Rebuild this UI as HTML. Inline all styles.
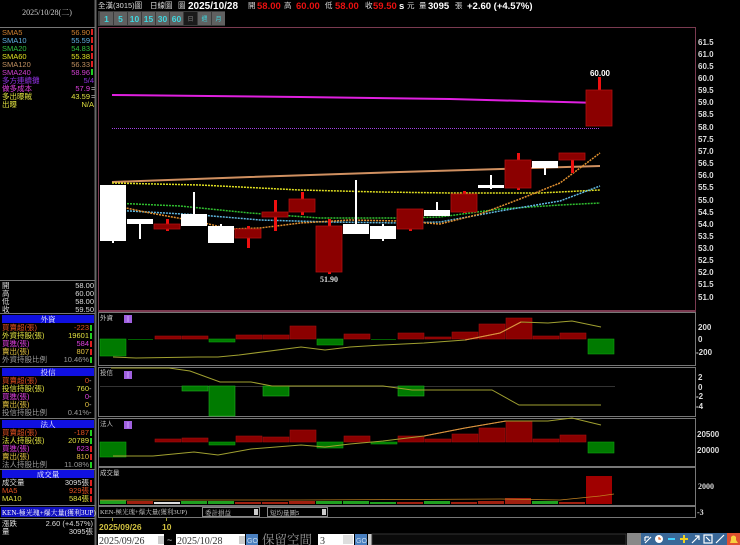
<!DOCTYPE html>
<html><head><meta charset="utf-8"><style>
html,body{margin:0;padding:0;background:#000;width:740px;height:545px;overflow:hidden}
svg{display:block}
text{font-family:"Liberation Sans","Noto Sans CJK TC",sans-serif}
.s{font-family:"Liberation Serif","Noto Serif CJK SC",serif}
</style></head><body>
<svg width="740" height="545" viewBox="0 0 740 545" xmlns="http://www.w3.org/2000/svg">
<rect width="740" height="545" fill="#000"/>
<!-- left panel -->
<line x1="95.5" y1="0" x2="95.5" y2="545" stroke="#666" stroke-width="2"/>
<text x="47" y="15" fill="#ccc" font-size="8" text-anchor="middle" class="s">2025/10/28(二)</text>
<line x1="0" y1="27.5" x2="95" y2="27.5" stroke="#777"/>
<g font-size="7.5" class="s">
<text x="2" y="35" fill="#d08030">SMA5</text><text x="90" y="35" fill="#d08030" text-anchor="end">56.90</text>
<text x="2" y="43" fill="#60b0e0">SMA10</text><text x="90" y="43" fill="#60b0e0" text-anchor="end">55.59</text>
<text x="2" y="51" fill="#30c040">SMA20</text><text x="90" y="51" fill="#30c040" text-anchor="end">54.83</text>
<text x="2" y="59" fill="#e0e020">SMA60</text><text x="90" y="59" fill="#e0e020" text-anchor="end">55.38</text>
<text x="2" y="67" fill="#c09060">SMA120</text><text x="90" y="67" fill="#c09060" text-anchor="end">56.33</text>
<text x="2" y="75" fill="#d040d0">SMA240</text><text x="90" y="75" fill="#d040d0" text-anchor="end">58.96</text>
<text x="2" y="83" fill="#9030e0">多方連續攤</text><text x="94" y="83" fill="#9030e0" text-anchor="end">5/4</text>
<text x="2" y="91" fill="#e040e0">做多成本</text><text x="90" y="91" fill="#e040e0" text-anchor="end">57.9</text>
<text x="2" y="99" fill="#e0e040">多出曝賊</text><text x="90" y="99" fill="#e0e040" text-anchor="end">43.59</text>
<text x="2" y="107" fill="#e0e040">出曝</text><text x="94" y="107" fill="#e0e040" text-anchor="end">N/A</text>
</g>
<g fill="#e02020"><rect x="91" y="29" width="2" height="6"/><rect x="91" y="37" width="2" height="6"/><rect x="91" y="45" width="2" height="6"/><rect x="91" y="53" width="2" height="6"/><rect x="91" y="61" width="2" height="6"/></g>
<rect x="91" y="69" width="2" height="6" fill="#20d020"/>
<g fill="#ccc" font-size="7"><text x="91" y="91">=</text><text x="91" y="99">=</text></g>

<line x1="0" y1="280.5" x2="95" y2="280.5" stroke="#777"/>
<g font-size="7.5" class="s" fill="#ddd">
<text x="2" y="288">開</text><text x="94" y="288" text-anchor="end">58.00</text>
<text x="2" y="296">高</text><text x="94" y="296" text-anchor="end">60.00</text>
<text x="2" y="304">低</text><text x="94" y="304" text-anchor="end">58.00</text>
<text x="2" y="312">收</text><text x="94" y="312" text-anchor="end">59.50</text>
</g>
<line x1="0" y1="313.5" x2="95" y2="313.5" stroke="#777"/>
<!-- 外資 -->
<rect x="2" y="315" width="92" height="8" fill="#1010e0"/>
<text x="48" y="322" fill="#fff" font-size="7.5" text-anchor="middle" class="s">外資</text>
<g font-size="7.5" class="s">
<text x="2" y="330" fill="#e05020">買賣超(張)</text><text x="89" y="330" fill="#e05020" text-anchor="end">-223</text>
<text x="2" y="338" fill="#e0e040">外資持股(張)</text><text x="89" y="338" fill="#e0e040" text-anchor="end">19601</text>
<text x="2" y="346" fill="#e040e0">買進(張)</text><text x="89" y="346" fill="#e040e0" text-anchor="end">584</text>
<text x="2" y="354" fill="#e0c040">賣出(張)</text><text x="89" y="354" fill="#e0c040" text-anchor="end">807</text>
<text x="2" y="362" fill="#999">外資持股比例</text><text x="89" y="362" fill="#999" text-anchor="end">10.46%</text>
</g>
<g><rect x="90" y="325" width="2" height="6" fill="#20d020"/><rect x="90" y="333" width="2" height="6" fill="#20d020"/><rect x="90" y="341" width="2" height="6" fill="#e02020"/><rect x="90" y="349" width="2" height="6" fill="#e02020"/><rect x="90" y="357" width="2" height="6" fill="#20d020"/></g>
<line x1="0" y1="366.5" x2="95" y2="366.5" stroke="#777"/>
<!-- 投信 -->
<rect x="2" y="368" width="92" height="8" fill="#1010e0"/>
<text x="48" y="375" fill="#fff" font-size="7.5" text-anchor="middle" class="s">投信</text>
<g font-size="7.5" class="s">
<text x="2" y="383" fill="#e05020">買賣超(張)</text><text x="89" y="383" fill="#e05020" text-anchor="end">0</text>
<text x="2" y="391" fill="#e0e040">投信持股(張)</text><text x="89" y="391" fill="#e0e040" text-anchor="end">760</text>
<text x="2" y="399" fill="#e040e0">買進(張)</text><text x="89" y="399" fill="#e040e0" text-anchor="end">0</text>
<text x="2" y="407" fill="#e0c040">賣出(張)</text><text x="89" y="407" fill="#e0c040" text-anchor="end">0</text>
<text x="2" y="415" fill="#999">投信持股比例</text><text x="89" y="415" fill="#999" text-anchor="end">0.41%</text>
<g fill="#ccc"><text x="89" y="383">-</text><text x="89" y="391">-</text><text x="89" y="399">-</text><text x="89" y="407">-</text><text x="89" y="415">-</text></g>
</g>
<line x1="0" y1="418.5" x2="95" y2="418.5" stroke="#777"/>
<!-- 法人 -->
<rect x="2" y="420" width="92" height="8" fill="#1010e0"/>
<text x="48" y="427" fill="#fff" font-size="7.5" text-anchor="middle" class="s">法人</text>
<g font-size="7.5" class="s">
<text x="2" y="435" fill="#e05020">買賣超(張)</text><text x="89" y="435" fill="#e05020" text-anchor="end">-187</text>
<text x="2" y="443" fill="#e0e040">法人持股(張)</text><text x="89" y="443" fill="#e0e040" text-anchor="end">20789</text>
<text x="2" y="451" fill="#e040e0">買進(張)</text><text x="89" y="451" fill="#e040e0" text-anchor="end">623</text>
<text x="2" y="459" fill="#e0c040">賣出(張)</text><text x="89" y="459" fill="#e0c040" text-anchor="end">810</text>
<text x="2" y="467" fill="#999">法人持股比例</text><text x="89" y="467" fill="#999" text-anchor="end">11.08%</text>
</g>
<g><rect x="90" y="430" width="2" height="6" fill="#20d020"/><rect x="90" y="438" width="2" height="6" fill="#20d020"/><rect x="90" y="446" width="2" height="6" fill="#e02020"/><rect x="90" y="454" width="2" height="6" fill="#e02020"/><rect x="90" y="462" width="2" height="6" fill="#20d020"/></g>
<line x1="0" y1="469.5" x2="95" y2="469.5" stroke="#777"/>
<!-- 成交量 -->
<rect x="2" y="470" width="92" height="8" fill="#1010e0"/>
<text x="48" y="477" fill="#fff" font-size="7.5" text-anchor="middle" class="s">成交量</text>
<g font-size="7.5" class="s">
<text x="2" y="485" fill="#ddd">成交量</text><text x="89" y="485" fill="#ddd" text-anchor="end">3095張</text>
<text x="2" y="493" fill="#e05020">MA5</text><text x="89" y="493" fill="#e05020" text-anchor="end">929張</text>
<text x="2" y="501" fill="#e0e040">MA10</text><text x="89" y="501" fill="#e0e040" text-anchor="end">584張</text>
</g>
<g fill="#e02020"><rect x="90" y="480" width="2" height="6"/><rect x="90" y="488" width="2" height="6"/><rect x="90" y="496" width="2" height="6"/></g>
<line x1="0" y1="505.5" x2="95" y2="505.5" stroke="#777"/>
<rect x="1" y="507" width="93" height="10" fill="#1010c0"/>
<text x="2" y="515" fill="#fff" font-size="7" class="s">KEN-極光瑰+爆大量(獲利3UP)</text>
<line x1="0" y1="518.5" x2="95" y2="518.5" stroke="#777"/>
<g font-size="7.5" class="s" fill="#ddd">
<text x="2" y="526">漲跌</text><text x="93" y="526" text-anchor="end">2.60 (+4.57%)</text>
<text x="2" y="534">量</text><text x="93" y="534" text-anchor="end">3095張</text>
</g>

<!-- top bar -->
<g font-size="7.5" class="s" fill="#ddd">
<text x="98" y="8">全漢(3015)圖</text><text x="150" y="8">日線圖</text><text x="178" y="8">圖</text>
</g>
<text x="188" y="9" fill="#fff" font-size="10" font-weight="bold">2025/10/28</text>
<g font-size="7.5" class="s" fill="#ddd"><text x="248" y="8">開</text><text x="284" y="8">高</text><text x="325" y="8">低</text><text x="365" y="8">收</text><text x="407" y="8">元</text><text x="419" y="8">量</text><text x="455" y="8">張</text></g>
<g font-size="9.5" font-weight="bold" fill="#e81010"><text x="257" y="9">58.00</text><text x="296" y="9">60.00</text><text x="335" y="9">58.00</text><text x="373" y="9">59.50</text></g>
<g font-size="9.5" font-weight="bold" fill="#fff"><text x="399" y="9">s</text><text x="428" y="9">3095</text><text x="467" y="9">+2.60 (+4.57%)</text></g>
<!-- period buttons -->
<rect x="98" y="11" width="127" height="15" fill="#3a3a3a"/>
<g fill="#606060"><rect x="100" y="12" width="13" height="13"/><rect x="114" y="12" width="13" height="13"/><rect x="128" y="12" width="13" height="13"/><rect x="142" y="12" width="13" height="13"/><rect x="156" y="12" width="13" height="13"/><rect x="170" y="12" width="13" height="13"/><rect x="198" y="12" width="13" height="13"/><rect x="212" y="12" width="13" height="13"/></g>
<rect x="184" y="12" width="13" height="13" fill="#1a1a1a"/>
<g fill="#40d8e0" font-size="8.5" font-weight="bold" text-anchor="middle"><text x="106.5" y="22">1</text><text x="120.5" y="22">5</text><text x="134.5" y="22">10</text><text x="148.5" y="22">15</text><text x="162.5" y="22">30</text><text x="176.5" y="22">60</text></g>
<g font-size="6" text-anchor="middle" class="s"><text x="190.5" y="21" fill="#888">日</text><text x="204.5" y="21" fill="#40d8e0">週</text><text x="218.5" y="21" fill="#40d8e0">月</text></g>

<!-- main frame -->
<rect x="98.5" y="27.5" width="597" height="283" fill="none" stroke="#7a3a50"/>
<g font-size="8" fill="#ddd" font-weight="bold" class="s">
<text x="698" y="45">61.5</text><text x="698" y="57">61.0</text><text x="698" y="69">60.5</text><text x="698" y="81">60.0</text><text x="698" y="93">59.5</text><text x="698" y="105">59.0</text><text x="698" y="117">58.5</text><text x="698" y="130">58.0</text><text x="698" y="142">57.5</text><text x="698" y="154">57.0</text><text x="698" y="166">56.5</text><text x="698" y="178">56.0</text><text x="698" y="190">55.5</text><text x="698" y="203">55.0</text><text x="698" y="215">54.5</text><text x="698" y="227">54.0</text><text x="698" y="239">53.5</text><text x="698" y="251">53.0</text><text x="698" y="263">52.5</text><text x="698" y="275">52.0</text><text x="698" y="287">51.5</text><text x="698" y="300">51.0</text>
</g>
<!-- MA lines -->
<polyline points="112,95 300,97 450,99 600,103" fill="none" stroke="#e020e0" stroke-width="2"/>
<line x1="112" y1="128.5" x2="600" y2="128.5" stroke="#a040e0" stroke-dasharray="1,1"/>
<polyline points="112,182 250,177 400,172 600,166" fill="none" stroke="#d09060" stroke-width="2"/>
<polyline points="112,183 200,185 300,190 380,192 450,193 540,193 600,190" fill="none" stroke="#e0e020" stroke-width="1.5" stroke-dasharray="2,1"/>
<polyline points="112,203 180,206 250,213 320,218 400,218 440,217 500,209 560,205 600,203" fill="none" stroke="#30c030" stroke-width="1.5" stroke-dasharray="2,1"/>
<polyline points="112,210 200,215 260,220 330,222 400,223 440,222 500,211 560,201 600,186" fill="none" stroke="#60b8e0" stroke-width="1.5" stroke-dasharray="2,1"/>
<polyline points="112,205 150,213 200,222 230,229 260,228 300,223 350,220 400,221 440,224 480,214 520,199 560,183 600,153" fill="none" stroke="#e09030" stroke-width="1.5" stroke-dasharray="2,1"/>
<!-- candles -->
<g fill="#fff">
<rect x="112" y="185" width="2" height="58"/><rect x="100" y="185" width="26" height="56"/>
<rect x="139" y="219" width="2" height="20"/><rect x="127" y="219" width="26" height="5"/>
<rect x="193" y="192" width="2" height="34"/><rect x="181" y="214" width="26" height="12"/>
<rect x="220" y="224" width="2" height="19"/><rect x="208" y="226" width="26" height="17"/>
<rect x="355" y="180" width="2" height="54"/><rect x="343" y="224" width="26" height="10"/>
<rect x="382" y="224" width="2" height="17"/><rect x="370" y="226" width="26" height="13"/>
<rect x="436" y="202" width="2" height="14"/><rect x="424" y="210" width="26" height="6"/>
<rect x="490" y="175" width="2" height="14"/><rect x="478" y="185" width="26" height="3"/>
<rect x="544" y="161" width="2" height="14"/><rect x="532" y="161" width="26" height="7"/>
</g>
<g fill="#ee1010">
<rect x="166" y="219" width="3" height="12"/><rect x="247" y="226" width="3" height="22"/><rect x="274" y="200" width="3" height="31"/><rect x="301" y="192" width="3" height="23"/><rect x="328" y="219" width="3" height="55"/><rect x="409" y="209" width="3" height="22"/><rect x="463" y="191" width="3" height="22"/><rect x="517" y="153" width="3" height="37"/><rect x="571" y="153" width="3" height="20"/><rect x="598" y="77" width="3" height="13"/>
</g>
<g fill="#8b0000" stroke="#b01010" stroke-width="0.8">
<rect x="154" y="224" width="26" height="5"/><rect x="235" y="229" width="26" height="9"/><rect x="262" y="212" width="26" height="5"/><rect x="289" y="199" width="26" height="13"/><rect x="316" y="226" width="26" height="46"/><rect x="397" y="209" width="26" height="20"/><rect x="451" y="194" width="26" height="18"/><rect x="505" y="160" width="26" height="28"/><rect x="559" y="153" width="26" height="7"/><rect x="586" y="90" width="26" height="36"/>
</g>
<text x="329" y="282" fill="#ddd" font-size="8" font-weight="bold" text-anchor="middle" class="s">51.90</text>
<text x="600" y="76" fill="#fff" font-size="8" font-weight="bold" text-anchor="middle">60.00</text>

<!-- sub panels frames -->
<g fill="none" stroke="#777">
<rect x="98.5" y="312.5" width="597" height="53"/>
<rect x="98.5" y="367.5" width="597" height="49"/>
<rect x="98.5" y="418.5" width="597" height="48"/>
<rect x="98.5" y="467.5" width="597" height="38"/>
<rect x="98.5" y="506.5" width="597" height="11"/>
</g>
<line x1="98" y1="311.5" x2="696" y2="311.5" stroke="#7a3a50"/>
<g font-size="6.5" fill="#ccc" class="s"><text x="100" y="320">外資</text><text x="100" y="375">投信</text><text x="100" y="426">法人</text><text x="100" y="475">成交量</text></g>
<g fill="#a060e0"><rect x="124" y="315" width="8" height="8"/><rect x="124" y="371" width="8" height="8"/><rect x="124" y="421" width="8" height="8"/></g>
<g stroke="#e0d0ff" stroke-width="0.6"><line x1="128" y1="316" x2="128" y2="322"/><line x1="128" y1="372" x2="128" y2="378"/><line x1="128" y1="422" x2="128" y2="428"/></g>
<!-- 外資 -->
<g fill="#8b0000" stroke="#a01010" stroke-width="0.6">
<rect x="155" y="336" width="26" height="3"/><rect x="182" y="336" width="26" height="3"/><rect x="236" y="335" width="26" height="4"/><rect x="263" y="335" width="26" height="4"/><rect x="290" y="326" width="26" height="13"/><rect x="344" y="334" width="26" height="5"/><rect x="398" y="333" width="26" height="6"/><rect x="425" y="337" width="26" height="2"/><rect x="452" y="332" width="26" height="7"/><rect x="479" y="324" width="26" height="15"/><rect x="506" y="318" width="26" height="21"/><rect x="533" y="336" width="26" height="3"/><rect x="560" y="333" width="26" height="6"/>
</g>
<g fill="#007a00" stroke="#10a010" stroke-width="0.6">
<rect x="100" y="339" width="26" height="17"/><rect x="209" y="339" width="26" height="3"/><rect x="317" y="339" width="26" height="6"/><rect x="588" y="339" width="26" height="15"/>
</g>
<line x1="128" y1="339.5" x2="153" y2="339.5" stroke="#006000"/><line x1="371" y1="339.5" x2="396" y2="339.5" stroke="#006000"/>
<polyline points="113,357 136,358 198,357 218,357 239,355 301,347 325,350 350,347 383,345 424,343 465,340 500,333 521,322 548,323 572,321 601,327" fill="none" stroke="#a0a030" stroke-width="1"/>
<polyline points="465,340 500,333 521,322" fill="none" stroke="#e09040" stroke-width="1"/>
<g font-size="8" fill="#ddd" font-weight="bold" class="s"><text x="698" y="330">200</text><text x="698" y="342">0</text><text x="696" y="355">-200</text></g>
<!-- 投信 -->
<line x1="100" y1="386.5" x2="615" y2="386.5" stroke="#333"/>
<g fill="#007a00" stroke="#20b020" stroke-width="0.6">
<rect x="182" y="386" width="26" height="5"/><rect x="209" y="386" width="26" height="30"/><rect x="263" y="386" width="26" height="10"/><rect x="398" y="386" width="26" height="10"/>
</g>
<polyline points="111,368 169,368 190,371 220,382 251,382 272,386 383,386 412,390 492,390 519,405 601,405" fill="none" stroke="#a0a030" stroke-width="1"/>
<g font-size="8" fill="#ddd" font-weight="bold" class="s"><text x="698" y="380">2</text><text x="698" y="390">0</text><text x="696" y="399">-2</text><text x="696" y="409">-4</text></g>
<!-- 法人 -->
<g fill="#8b0000" stroke="#a01010" stroke-width="0.6">
<rect x="155" y="439" width="26" height="3"/><rect x="182" y="438" width="26" height="4"/><rect x="236" y="436" width="26" height="6"/><rect x="263" y="437" width="26" height="5"/><rect x="290" y="430" width="26" height="12"/><rect x="344" y="436" width="26" height="6"/><rect x="398" y="436" width="26" height="6"/><rect x="425" y="439" width="26" height="3"/><rect x="452" y="434" width="26" height="8"/><rect x="479" y="428" width="26" height="14"/><rect x="506" y="421" width="26" height="21"/><rect x="533" y="439" width="26" height="3"/><rect x="560" y="435" width="26" height="7"/>
</g>
<g fill="#007a00" stroke="#10a010" stroke-width="0.6">
<rect x="100" y="442" width="26" height="15"/><rect x="209" y="442" width="26" height="3"/><rect x="317" y="442" width="26" height="6"/><rect x="371" y="442" width="26" height="2"/><rect x="588" y="442" width="26" height="11"/>
</g>
<polyline points="113,456 153,456 194,452 218,455 251,449 301,445 325,447 350,444 383,441 424,436 465,428 506,421 521,421 548,421 572,418 601,425" fill="none" stroke="#a0a030" stroke-width="1"/>
<polyline points="424,436 465,428 506,421" fill="none" stroke="#e09040" stroke-width="1"/>
<g font-size="8" fill="#ddd" font-weight="bold" class="s"><text x="697" y="437">20500</text><text x="697" y="453">20000</text></g>
<!-- volume -->
<g>
<rect x="100" y="500" width="26" height="4" fill="#20a020"/><rect x="127" y="501" width="26" height="3" fill="#a02010"/><rect x="154" y="502" width="26" height="2" fill="#ddd"/><rect x="181" y="501" width="26" height="3" fill="#20a020"/><rect x="208" y="501" width="26" height="3" fill="#20a020"/><rect x="235" y="502" width="26" height="2" fill="#a02010"/><rect x="262" y="502" width="26" height="2" fill="#a02010"/><rect x="289" y="501" width="26" height="3" fill="#a02010"/><rect x="316" y="501" width="26" height="3" fill="#20a020"/><rect x="343" y="501" width="26" height="3" fill="#20a020"/><rect x="370" y="502" width="26" height="2" fill="#20a020"/><rect x="397" y="502" width="26" height="2" fill="#a02010"/><rect x="424" y="501" width="26" height="3" fill="#20a020"/><rect x="451" y="502" width="26" height="2" fill="#a02010"/><rect x="478" y="501" width="26" height="3" fill="#a02010"/><rect x="505" y="498" width="26" height="6" fill="#a02010"/><rect x="532" y="501" width="26" height="3" fill="#20a020"/><rect x="559" y="502" width="26" height="2" fill="#a02010"/><rect x="586" y="476" width="26" height="28" fill="#a00000"/>
</g>
<polyline points="100,500 300,500 500,499 560,500 600,496 614,494" fill="none" stroke="#c08020" stroke-width="0.8"/>
<text x="698" y="489" font-size="8" fill="#ddd" font-weight="bold" class="s">2000</text>
<!-- indicator row -->
<text x="100" y="514" font-size="6.5" fill="#ccc" class="s">KEN-極光瑰+爆大量(獲利3UP)</text>
<rect x="202.5" y="507.5" width="57" height="9" fill="#000" stroke="#888"/><text x="205" y="515" font-size="6.5" fill="#ccc" class="s">委計損益</text><rect x="254" y="509" width="4" height="6" fill="#ccc"/>
<rect x="267.5" y="507.5" width="60" height="9" fill="#000" stroke="#888"/><text x="270" y="515" font-size="6.5" fill="#ccc" class="s">短均量圖5</text><rect x="322" y="509" width="4" height="6" fill="#ccc"/>
<text x="697" y="515" font-size="8" fill="#ddd" font-weight="bold" class="s">-3</text>
<!-- date row -->
<line x1="112.5" y1="518" x2="112.5" y2="521" stroke="#a0a030"/><line x1="166.5" y1="518" x2="166.5" y2="521" stroke="#a0a030"/>
<text x="99" y="530" font-size="8.5" fill="#d0c040" font-weight="bold">2025/09/26</text>
<text x="162" y="530" font-size="8.5" fill="#d0c040" font-weight="bold">10</text>
<!-- bottom toolbar -->
<rect x="97" y="533" width="643" height="12" fill="#000"/>
<rect x="98" y="534" width="66" height="11" fill="#fff"/><text x="99" y="544" font-size="10" fill="#333" class="s">2025/09/26</text><rect x="158" y="536" width="6" height="8" fill="#ccc"/>
<text x="167" y="543" font-size="9" fill="#ccc">~</text>
<rect x="176" y="534" width="69" height="11" fill="#fff"/><text x="177" y="544" font-size="10" fill="#333" class="s">2025/10/28</text><rect x="239" y="536" width="6" height="8" fill="#ccc"/>
<rect x="246" y="534" width="12" height="11" fill="#4a80c0"/><text x="247" y="543" font-size="7" fill="#cde">GO</text>
<text x="262" y="544" font-size="12.5" fill="#999" class="s">保留空間</text>
<rect x="318" y="534" width="36" height="11" fill="#fff"/><text x="320" y="544" font-size="10" fill="#333" class="s">3</text><rect x="343" y="535" width="10" height="9" fill="#ddd"/>
<rect x="355" y="534" width="12" height="11" fill="#4a80c0"/><text x="356" y="543" font-size="7" fill="#cde">GO</text>
<rect x="368" y="534" width="4" height="11" fill="#ccc"/>
<rect x="372" y="534" width="254" height="11" fill="#0a0a0a" stroke="#333"/>
<rect x="627" y="533" width="14" height="12" fill="#888"/>
<rect x="641" y="533" width="86" height="12" fill="#3a6898"/>
<g stroke="#fff" stroke-width="1.2" fill="none">
<path d="M645 543 L651 537 M645 537 L645 541 M645 537 L649 537"/>
<circle cx="659" cy="539" r="4" fill="#fff" stroke="none"/><path d="M659 537 V539 H661" stroke="#e06020"/>
<path d="M668 539 H675" stroke="#40d0ff" stroke-width="2"/>
<path d="M680 539 H688 M684 535 V543" stroke="#f0d020" stroke-width="2"/>
<path d="M692 543 L699 536 M695 536 H699 V540"/>
<path d="M704 535 H712 V543 H704 Z M706 537 L710 541"/>
<path d="M716 543 L724 535"/>
</g>
<rect x="727" y="533" width="13" height="12" fill="#e05030"/>
<path d="M730 543 H738 L736 540 V537 Q733.5 534 731 537 V540 Z" fill="#f8d040"/>
</svg>
</body></html>
